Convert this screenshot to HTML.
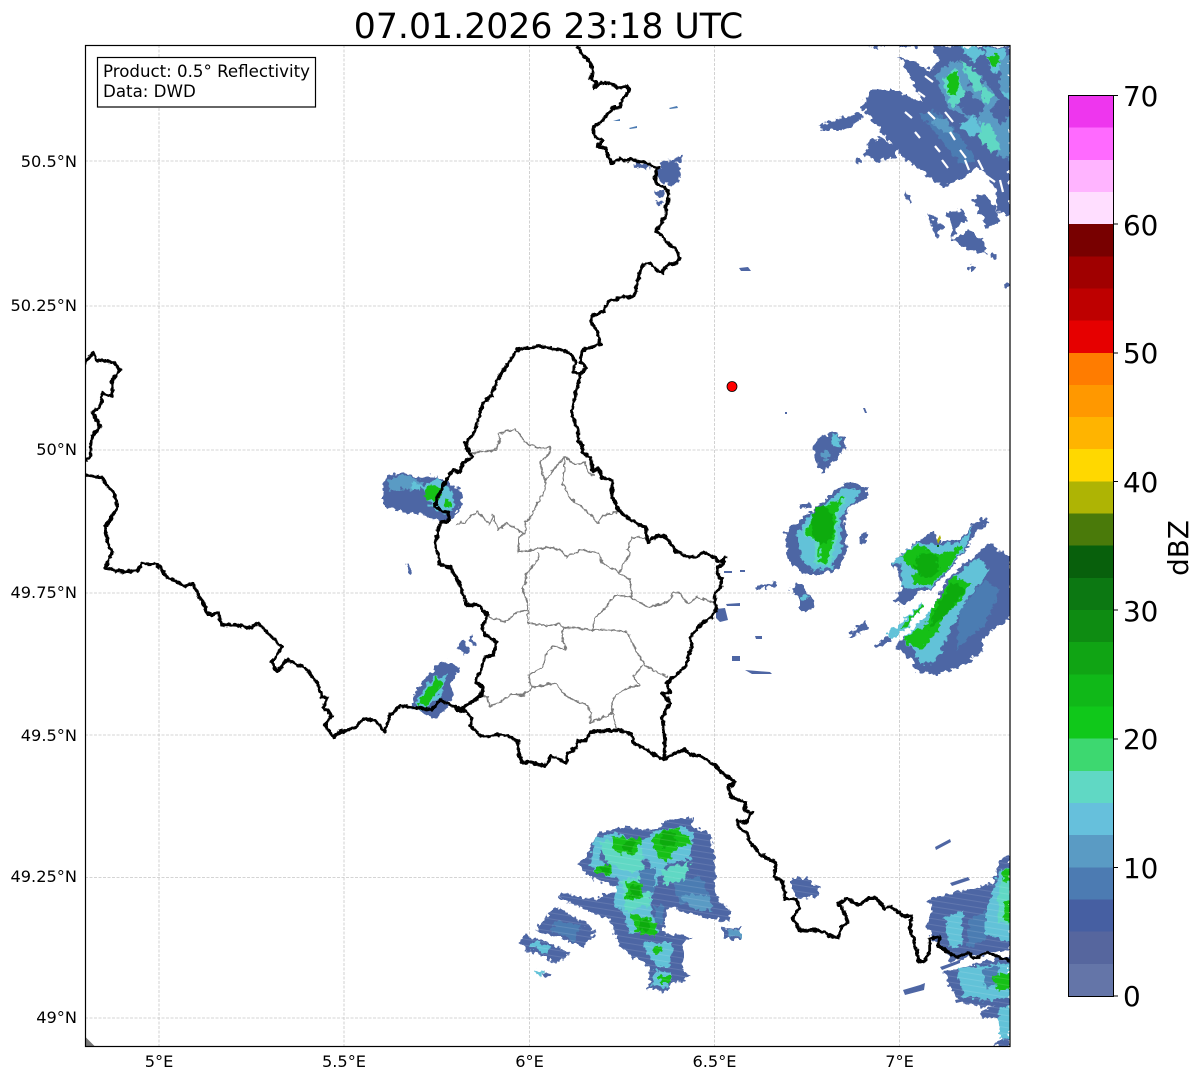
<!DOCTYPE html>
<html><head><meta charset="utf-8"><style>
html,body{margin:0;padding:0;background:#fff}
svg{display:block}
text{font-family:"DejaVu Sans",sans-serif;fill:#000}
.lab{font-size:16.67px}
.tk{font-size:16.2px}
.cb{font-size:27.8px}
.d{fill:#4e66a4}.m{fill:#4c7bb2}.b{fill:#5a9bc4}.c{fill:#62c2d8}.t{fill:#60d8c4}.g{fill:#12c018}.h{fill:#0cab10}.w{fill:#fff}
.bk{fill:none;stroke:#000;stroke-width:3.3;stroke-linejoin:round;stroke-linecap:round}
.gy{fill:none;stroke:#7c7c7c;stroke-width:1.5;stroke-linejoin:round}
.gr{fill:none;stroke:#c6c6c6;stroke-width:.8;stroke-dasharray:3 1.5}
</style></head><body>
<svg width="1202" height="1081" viewBox="0 0 1202 1081" xmlns="http://www.w3.org/2000/svg">
<defs>
<clipPath id="ax"><rect x="85.5" y="45.5" width="924.5" height="1001"/></clipPath>
<filter id="r" x="-5%" y="-5%" width="110%" height="110%"><feTurbulence type="fractalNoise" baseFrequency=".2" numOctaves="2" seed="4" result="n"/><feDisplacementMap in="SourceGraphic" in2="n" scale="9" xChannelSelector="R" yChannelSelector="G"/></filter>
<filter id="wig" filterUnits="userSpaceOnUse" x="0" y="0" width="1202" height="1081"><feTurbulence type="fractalNoise" baseFrequency=".22" numOctaves="2" seed="9" result="n"/><feDisplacementMap in="SourceGraphic" in2="n" scale="4.5" xChannelSelector="R" yChannelSelector="G"/></filter>
<pattern id="ps" width="40" height="6" patternUnits="userSpaceOnUse" patternTransform="rotate(9)"><rect width="40" height="6" fill="#fff"/><rect y="5" width="40" height="1" fill="#e2e2e2"/></pattern>
<mask id="ms" maskUnits="userSpaceOnUse" x="85" y="45" width="925" height="1001"><rect x="85" y="45" width="925" height="1001" fill="url(#ps)"/></mask>
</defs>
<rect width="1202" height="1081" fill="#fff"/>
<text x="548.5" y="38" font-size="34.7" text-anchor="middle">07.01.2026 23:18 UTC</text>

<g clip-path="url(#ax)">
<!-- grid -->
<path class="gr" d="M159 45V1046M344 45V1046M529.5 45V1046M714.5 45V1046M899.5 45V1046"/>
<path class="gr" d="M85 161H1010M85 306H1010M85 450H1010M85 593H1010M85 735H1010M85 877.5H1010M85 1018H1010"/>
<path d="M85.5 1037L95 1046.5H85.5Z" fill="#777"/>

<!-- NE radar -->
<g filter="url(#r)">
<path class="d" d="M930 46L1010 46V215L998 212 996 190 985 172 975 168 960 180 943 187 930 178 915 165 905 160 893 145 880 130 862 107 870 90 893 90 910 97 923 103 907 70 900 57 913 62 930 70 940 60Z"/>
<path class="d" d="M973 200L983 193 997 208 1000 222 987 228Z"/>
<path class="d" d="M870 140L883 138 897 148 895 157 877 162 863 155Z"/>
<path class="d" d="M818 126L837 120 860 113 862 118 843 130 823 130Z"/>
<path class="d" d="M927 212L943 227 937 237 930 225ZM947 212L963 210 967 220 957 227 953 240 970 230 983 240 987 253 967 250 953 242 952 225Z"/>
<path class="d" d="M905 190L912 200 909 203 904 194ZM869 44H882L885 47 875 48ZM899 44H918L915 47H900Z"/>
<circle class="d" cx="972" cy="268" r="3"/><circle class="d" cx="995" cy="257" r="3"/><circle class="d" cx="1007" cy="285" r="3"/>
<circle class="d" cx="859" cy="161" r="3"/>
<path class="m" d="M920 115L935 110 960 135 975 160 962 165 945 145Z"/>
<path class="b" d="M935 75L955 60 975 70 1000 100 1010 110V160L990 150 965 115 950 110Z"/>
<path class="d" d="M965 90L985 105 975 120 955 105ZM990 110L1005 95 1010 115 1000 125ZM972 72L985 82 980 92 968 84Z"/>
<path class="t" d="M942 80L955 68 965 95 952 108ZM960 60L975 70 985 88 975 92ZM975 130L990 122 1002 150 990 152ZM980 85L995 95 985 105Z"/>
<path class="c" d="M960 46H975L985 52 972 62ZM985 48H1005L1008 68 992 72ZM1000 75L1010 80V100L1002 95ZM960 125L975 115 982 132 970 138Z"/>
<path class="g" d="M947 75L956 72 959 86 955 96 948 94Z"/><path class="g" d="M988 58L996 54 1000 62 993 67Z"/>
<path class="b" d="M1000 60L1010 55V95L1000 90ZM930 120L945 118 955 135 940 130Z"/>
</g>
<path d="M925 76L933 82M928 112L935 119M945 112L953 122M905 112L912 118M950 132L955 140M935 146L940 152M965 160L969 170M978 160L983 170M985 175L995 182M915 132L920 138M918 92L925 97M1000 180L1003 192M960 150L966 158M942 160L948 168" stroke="#fff" stroke-width="2.2" fill="none"/>

<!-- small near north -->
<g filter="url(#r)" class="d">
<ellipse cx="669" cy="173" rx="12" ry="12"/>
<path d="M633 162L648 163 650 169 637 168Z"/><path d="M655 190L665 190 664 198 657 198Z" />
<path d="M655 200L664 201 663 206 658 205Z"/><path d="M668 160L684 157 684 160 672 163Z"/>
</g>
<path class="m" d="M669 108L677 106 678 108 670 109ZM613 121L620 119 620 121ZM629 128L637 126 637 128 630 129Z"/>
<path class="d" d="M739 268L748 267 751 271 741 271ZM785 412h2v2h-2ZM863 408l2 0 2 5-2 0Z"/>

<!-- mid blobs -->
<g filter="url(#r)">
<path class="d" d="M817 438L832 432 845 437 845 447 833 463 822 473 815 457 813 448Z"/>
<ellipse class="c" cx="836" cy="441" rx="4" ry="7"/><ellipse class="b" cx="826" cy="455" rx="5" ry="5"/>
<path class="d" d="M785 532L803 518 825 500 838 487 848 482 867 487 868 497 850 507 845 520 847 550 840 568 820 575 807 575 798 570 788 560 787 543Z"/>
<path class="c" d="M795 535L813 513 827 503 843 488 860 490 855 500 840 517 842 547 832 568 813 570 802 560 798 543Z"/>
<path class="t" d="M802 532L820 507 847 497 838 513 837 540 830 567 815 563 815 540 806 538Z"/>
<path class="g" d="M805 532L820 510 843 497 836 513 834 540 826 565 819 560 820 540 808 537Z"/>
<ellipse class="h" cx="822" cy="525" rx="11" ry="19"/>
<path class="d" d="M790 590L798 582 807 590 815 608 800 612 800 600Z"/><ellipse class="c" cx="805" cy="597" rx="4" ry="3"/>
<path class="d" d="M858 542L865 532 868 535 863 544ZM800 505L812 502 810 507 802 508ZM848 637L865 620 870 628 857 635ZM875 645L888 636 891 639 878 648ZM754 587L776 582 777 585 758 590Z"/>
</g>

<!-- E storm -->
<g filter="url(#r)">
<path class="d" d="M895 597L903 587 892 563 917 542 933 532 940 542 960 540 973 523 983 517 989 522 978 530 967 547 950 570 930 590 920 590 903 607 895 600Z"/>
<path class="c" d="M892 563L917 543 940 545 960 543 973 525 967 545 947 571 930 588 910 588 902 587 903 565Z"/>
<path class="g" d="M900 557L918 545 940 555 964 545 947 570 930 585 913 585 915 570Z"/>
<ellipse class="h" cx="927" cy="565" rx="12" ry="13"/>
<path class="d" d="M947 578L990 543 1010 557V620L998 627 983 637 983 650 967 663 937 675 917 672 910 657 895 647 903 638 917 630 933 607Z"/>
<path class="m" d="M960 610L985 580 1000 590 985 625 955 650Z"/>
<path class="c" d="M903 640L933 607 950 580 978 557 990 570 965 603 950 630 935 662 920 665 913 648Z"/>
<path class="g" d="M903 640L927 623 933 607 952 577 972 583 959 603 942 617 939 630 920 650Z"/>
<path class="h" d="M935 610L952 582 966 590 950 610 930 630Z"/>
<path class="c" d="M887 633L902 622 922 602 924 605 907 628 890 638Z"/>
<path class="g" d="M902 627L922 603 924 605 907 627Z"/>
<path class="d" d="M876 646L890 637 892 640 878 648Z"/>
</g>
<path d="M937 540l3-5 1 3-3 6z" fill="#aeb404"/>
<path d="M937 545h2v2h-2z" fill="#08600c"/>
<path class="d" d="M716 609L725 608 728 620 720 622 716 618ZM726 604L740 603V606H727ZM732 656H740V661H732ZM745 670L770 672 772 674 752 674ZM755 636H762V639H756ZM724 571H732V573H724ZM740 570h5v2h-5Z"/>

<!-- W storm -->
<g filter="url(#r)">
<path class="d" d="M383 483L388 475 403 472 417 477 433 475 448 482 460 490 462 505 450 523 437 520 420 513 403 512 393 508 383 507Z"/>
<path class="b" d="M388 480L403 475 420 480 425 488 400 490 390 492Z"/>
<path class="c" d="M412 482L425 486 420 490 410 488Z"/>
<path class="c" d="M422 487L438 478 450 490 456 505 445 515 430 505Z"/>
<ellipse class="g" cx="433" cy="493" rx="8" ry="8"/>
<ellipse class="g" cx="447" cy="504" rx="4" ry="4"/>
<path class="d" d="M405 565L408 564 413 573 410 575Z M457 645L463 640 470 650 463 655Z M468 637L471 636 477 645 474 647Z"/>
<path class="d" d="M410 702L423 680 443 660 460 668 450 687 453 697 443 713 433 718 413 708Z"/>
<path class="c" d="M415 702L433 678 448 675 437 700 422 710Z"/>
<path class="g" d="M418 703L436 678 443 684 426 708Z"/>
</g>

<!-- S storm -->
<g mask="url(#ms)"><g filter="url(#r)">
<path class="d" d="M597 833L623 827 653 830 667 820 693 817 693 828 710 833 715 860 715 897 730 910 730 923 710 918 687 913 668 907 663 933 693 937 683 943 682 968 690 977 670 985 668 992 648 988 650 967 633 957 617 943 610 918 597 915 558 898 562 893 597 900 603 893 617 893 618 888 592 878 578 865 590 850Z"/>
<path class="d" d="M550 913L555 907 580 920 597 932 583 947 537 930 540 925Z"/>
<path class="d" d="M520 943L525 935 553 945 570 955 557 963 528 950Z"/>
<path class="d" d="M723 928L740 927 740 940 723 937ZM792 878L807 878 819 889 819 896 802 899 792 892Z"/>
<path class="m" d="M672 880L700 875 712 900 680 905ZM556 920L580 925 575 942 550 930Z"/>
<path class="b" d="M728 929L740 930 740 938 728 936ZM680 895L710 895 712 912 690 908Z"/>
<path class="c" d="M533 940L550 947 547 953 530 947ZM595 838L613 833 643 840 657 830 683 827 693 833 690 860 667 863 657 883 650 900 658 933 630 933 623 913 613 903 620 880 610 877 588 867 593 850Z"/>
<path class="d" d="M600 852L612 855 610 866 600 862ZM640 858L652 862 648 874 640 872ZM650 895L662 892 662 910 652 908Z"/>
<path class="c" d="M643 943L673 943 670 967 660 967 650 958ZM655 970L672 972 668 988 650 985Z"/>
<path class="t" d="M600 840L640 845 645 870 625 872 605 860ZM660 870L690 862 685 880 665 885ZM622 880L650 875 650 905 625 912Z"/>
<path class="m" d="M640 870L655 868 655 890 640 895ZM655 905L663 905 662 925 655 920Z"/>
<path class="g" d="M612 837L642 838 635 855 620 853 611 848ZM652 840L663 830 678 828 692 843 675 850 667 862 657 855ZM595 867L612 863 612 875 597 873ZM627 882L643 883 642 898 625 900ZM630 913L657 922 655 937 637 932ZM653 947L663 947 663 954 653 953ZM660 975L670 975 670 983 660 983Z"/>
<path class="h" d="M625 840L635 842 632 853 622 850ZM662 832L675 832 676 845 660 848ZM600 868L610 866 610 873 600 872ZM630 885L640 886 640 896 630 896ZM640 918L650 922 648 932 640 930Z"/>
<path class="c" d="M533 970L543 973 542 977 533 973Z"/><path class="d" d="M543 972L553 974 552 978 543 976Z"/>
</g></g>

<!-- SE storm -->
<g mask="url(#ms)"><g filter="url(#r)">
<path class="d" d="M928 900L972 888 993 883 1000 860 1010 855V950L970 957 950 962 943 947 933 942 927 922 933 910Z"/>
<path class="d" d="M945 972L983 962 1010 955V1005L985 1007 963 1003 948 985Z"/>
<path class="d" d="M980 1012L1010 1000V1046H990L1003 1040 1007 1017 983 1017Z"/>
<path class="c" d="M945 918L963 910 963 943 950 947ZM987 907L1000 870 1010 867V943L983 933Z"/>
<path class="c" d="M957 968L1010 963V997L983 1000 963 997Z"/>
<path class="c" d="M998 1010L1010 1005V1040L1000 1038Z"/>
<path class="m" d="M968 920L985 912 985 940 968 948ZM983 968L1000 965 995 985 985 988ZM1002 885L1010 885V900L1002 900Z"/>
<path class="t" d="M1000 880L1010 875V925L997 920Z"/>
<path class="g" d="M1003 870L1010 868V882L1003 880ZM1004 903L1010 900V922L1004 920ZM993 977L1010 972V990L997 990Z"/>
</g></g>
<path class="d" d="M935 847L950 839 951 842 936 850ZM950 883L968 877 970 880 952 886ZM903 990L920 985 925 983 924 990 905 995ZM940 967L960 960 960 963 942 970ZM955 1000L965 998 965 1001 956 1003Z"/>

<!-- borders grey -->
<g filter="url(#wig)">
<path class="gy" d="M472 453L482 452 495 450 500 440 498 434 515 429 525 442 538 448 550 447 550 453 540 462 542 472 545 480 563 458 567 458 575 465 585 463 590 475 595 475"/>
<path class="gy" d="M545 480L545 490 535 507 533 515 525 522 525 533 519 537 518 553 535 549 550 547 560 550 567 557 580 550 598 552 602 563 612 568 619 573 630 580 632 597"/>
<path class="gy" d="M457 524L465 523 477 511 490 525 493 515 498 530 507 523 523 533"/>
<path class="gy" d="M565 458L563 483 570 498 585 510 598 523 603 515 618 512"/>
<path class="gy" d="M619 573L630 553 627 550 632 537 647 538"/>
<path class="gy" d="M538 552L538 560 527 573 525 585 522 588 528 603 528 623 547 626 560 623 563 627 577 628 592 630 603 629 627 632 637 653 645 665 657 673 668 677"/>
<path class="gy" d="M632 597L615 595 602 612 595 617 592 630"/>
<path class="gy" d="M630 597L648 607 668 602 673 593 680 593 688 604 697 597 715 603"/>
<path class="gy" d="M488 617L505 622 517 612 527 610"/>
<path class="gy" d="M563 627L562 637 566 650 555 646 547 652 542 668 528 675 532 688"/>
<path class="gy" d="M482 695L488 698 490 707 513 694 523 695 532 688 555 683 567 697 587 705 592 713 589 723 613 713 616 728"/>
<path class="gy" d="M613 713L612 703 615 695 630 687 640 685 633 677 643 665"/>
</g>

<!-- borders black -->
<g filter="url(#wig)">
<path class="bk" d="M578 47L583 55 590 62 593 72 591 78 596 82 595 88 600 83 610 83 618 88 628 87 629 92 622 100 620 107 612 108 603 120 593 128 595 137 603 140 598 147 605 148 612 164 620 159 627 161 630 158 637 161 645 162 650 165 658 168 655 175 656 183 663 187 668 190 668 200 666 208 666 215 660 225 656 231 663 237 667 243 677 250 680 258 677 263 668 265 662 270 663 273 657 270 650 263 643 265 640 272 637 283 636 292 632 297 623 297 608 302 603 312 593 315 591 322 597 330 598 337 600 345 588 348 583 350 580 362 587 368 580 374 573 372 576 362 570 353 560 350 540 346 517 350 497 380 492 395 483 403 478 420 473 435 465 443 472 457 463 463 460 472 452 470 445 483 437 498 435 507 448 513 450 520 440 523 437 535 435 543 438 555 440 565 450 567 458 580 467 605 478 605 488 615 482 627 485 635 497 642 493 655 485 657 482 668 475 682 483 687 482 695 463 708 458 710 467 712 472 718 470 725 480 735.5 489 737 495.5 734.5 507.5 735.5 518 741 518.5 754 523 763 531.6 762 545 766.5 551.6 755.5 566 763 567 754 576.4 747.5 578 740.7 587 740.7 590 732 617.7 730 631.5 733.8 633 742.4 648.7 751 654 754.4 664 759.6 673 754.4 685 749.3 690 754.4 700 755.5 714 764.8 722.8 773.4 735.5 782 728 787 731.4 797.5 745 802.6 745 811 752 813 745 823 738 820 738 827 748 833.6 748.6 840.5 760.6 854.3 776 863 774.4 876.7 783 882 784.8 899 795 899 800 907.7 792.7 918 800 930.7 817.5 930 838 938.7 841.6 926.6 847.8 923 845 913 838.8 904 846.7 898.4 858.8 905 869 898.4 876 898.4 884.6 908.7 889.8 906 903.6 916.3 912 916.3 909.7 926.6 916.6 950.7 919 962 924 961 929.4 952.4 929.4 938.7 939.7 937 938 945.5 957 957.6 969 952.4 974 959 986 952.4 1005 959 1010 961"/>
<path class="bk" d="M580 374L579 380 577 387 574 400 572 415 578 430 578 440 583 445 582 452 590 457 593 472 598 468 602 477 612 480 612 495 617 508 627 518 640 525 645 527 648 542 657 536 665 536 677 552 688 557 697 557 703 552 715 558 720 562 725 558 722 565 717 568 717 573 722 580 720 588 715 593 715 603 717 608 712 617 702 623 690 638 692 647 685 667 670 680 667 683 670 692 662 693 670 703 662 717 665 740 664 759"/>
<path class="bk" d="M85 363L93 353 97 360 113 362 120 370 112 380 112 397 103 393 100 407 92 412 100 426 92 437 90 457 85 460"/>
<path class="bk" d="M85 475L102 478 115 495 117 508 105 528 108 542 112 553 105 568 125 572 138 570 142 564 157 564 167 577 185 586 193 584 205 607 207 613 212 615 218 612 222 625 237 625 250 628 258 623 282 647 272 662 277 672 287 660 305 668 317 682 322 697 327 698 323 707 332 715 325 725 333 737 340 732 355 728 363 719 375 720 385 732 390 715 400 706 418 708 432 710 440 700 462 710"/>
</g>

<circle cx="732" cy="386.5" r="5" fill="#f00" stroke="#000" stroke-width=".8"/>
</g>

<rect x="85.5" y="45.5" width="924.5" height="1001" fill="none" stroke="#000" stroke-width="1.2"/>

<!-- info box -->
<rect x="97.5" y="57.5" width="218" height="49.5" fill="#fff" stroke="#000" stroke-width="1.2"/>
<text class="lab" x="103" y="77" textLength="207" lengthAdjust="spacingAndGlyphs">Product: 0.5° Reflectivity</text>
<text class="lab" x="103" y="97">Data: DWD</text>

<!-- axis labels -->
<g class="tk" text-anchor="end">
<text x="77" y="167">50.5°N</text><text x="77" y="311">50.25°N</text><text x="77" y="455">50°N</text><text x="77" y="598">49.75°N</text><text x="77" y="741">49.5°N</text><text x="77" y="882">49.25°N</text><text x="77" y="1023">49°N</text>
</g>
<g class="tk" text-anchor="middle">
<text x="159" y="1067">5°E</text><text x="344" y="1067">5.5°E</text><text x="529.5" y="1067">6°E</text><text x="714.5" y="1067">6.5°E</text><text x="899.5" y="1067">7°E</text>
</g>

<!-- colorbar -->
<g shape-rendering="crispEdges">
<rect x="1068" y="95.5" width="45" height="32.2" fill="#ee36ee"/><rect x="1068" y="127.6" width="45" height="32.2" fill="#ff6aff"/><rect x="1068" y="159.8" width="45" height="32.2" fill="#ffb4ff"/><rect x="1068" y="192" width="45" height="32.2" fill="#ffdeff"/>
<rect x="1068" y="224.1" width="45" height="32.2" fill="#780000"/><rect x="1068" y="256.3" width="45" height="32.2" fill="#a00000"/><rect x="1068" y="288.4" width="45" height="32.2" fill="#be0000"/><rect x="1068" y="320.6" width="45" height="32.2" fill="#e60000"/>
<rect x="1068" y="352.8" width="45" height="32.2" fill="#ff7c00"/><rect x="1068" y="384.9" width="45" height="32.2" fill="#ff9800"/><rect x="1068" y="417.1" width="45" height="32.2" fill="#ffb400"/><rect x="1068" y="449.2" width="45" height="32.2" fill="#ffd800"/>
<rect x="1068" y="481.4" width="45" height="32.2" fill="#aeb404"/><rect x="1068" y="513.6" width="45" height="32.2" fill="#4a7a0a"/><rect x="1068" y="545.7" width="45" height="32.2" fill="#08600c"/><rect x="1068" y="577.9" width="45" height="32.2" fill="#0c7812"/>
<rect x="1068" y="610" width="45" height="32.2" fill="#0e8c12"/><rect x="1068" y="642.2" width="45" height="32.2" fill="#10a414"/><rect x="1068" y="674.4" width="45" height="32.2" fill="#10b818"/><rect x="1068" y="706.5" width="45" height="32.2" fill="#10c81a"/>
<rect x="1068" y="738.7" width="45" height="32.2" fill="#3dd870"/><rect x="1068" y="770.8" width="45" height="32.2" fill="#60d8c4"/><rect x="1068" y="803" width="45" height="32.2" fill="#66c0dc"/><rect x="1068" y="835.2" width="45" height="32.2" fill="#5a9bc4"/>
<rect x="1068" y="867.3" width="45" height="32.2" fill="#4c7bb2"/><rect x="1068" y="899.5" width="45" height="32.2" fill="#465fa2"/><rect x="1068" y="931.6" width="45" height="32.2" fill="#56669e"/><rect x="1068" y="963.8" width="45" height="32.7" fill="#6475a8"/>
</g>
<rect x="1068.5" y="95.5" width="45" height="901" fill="none" stroke="#000" stroke-width="1"/>
<path d="M1113 95.5h5M1113 224h5M1113 353h5M1113 481.5h5M1113 610h5M1113 739h5M1113 867.5h5M1113 996h5" stroke="#000" stroke-width="1"/>
<g class="cb">
<text x="1123" y="106">70</text><text x="1123" y="235">60</text><text x="1123" y="363">50</text><text x="1123" y="492">40</text><text x="1123" y="621">30</text><text x="1123" y="749">20</text><text x="1123" y="878">10</text><text x="1123" y="1006">0</text>
</g>
<text class="cb" x="0" y="0" text-anchor="middle" transform="translate(1188 548) rotate(-90)">dBZ</text>
</svg>
</body></html>
